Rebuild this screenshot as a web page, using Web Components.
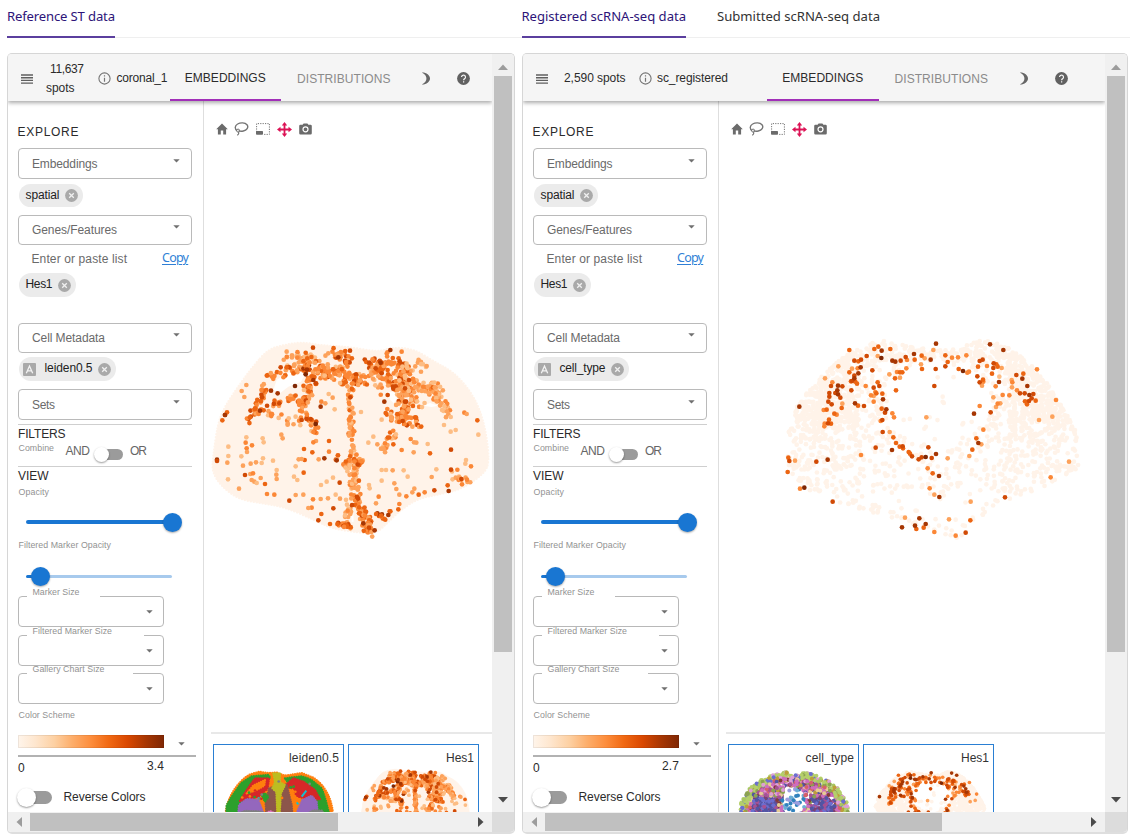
<!DOCTYPE html>
<html lang="en">
<head>
<meta charset="utf-8">
<title>Spatial data viewer</title>
<style>
html,body{margin:0;background:#fff;font-family:"Liberation Sans",Arial,sans-serif;color:#2b2b2b}
body{width:1137px;height:840px;overflow:hidden}
</style>
</head>
<body>
<app-shell></app-shell>
<script>
/* One line of text set to a given width by tracking */
class FitText extends HTMLElement{
  connectedCallback(){
    if(this.shadowRoot)return;
    const r=this.attachShadow({mode:'open'});
    r.innerHTML='<style>:host{display:block;white-space:pre;flex:none}</style><span><slot></slot></span>';
    const s=r.querySelector('span'),w=+this.getAttribute('w'),fs=+this.getAttribute('fs')||12;
    this.style.fontSize=fs+'px';
    const n=this.textContent.length,nat=s.getBoundingClientRect().width;
    if(n>1)s.style.letterSpacing=((w-nat)/(n-1))+'px';
    this.style.width=w+'px';
  }
}
customElements.define('fit-text',FitText);

class TabStrip extends HTMLElement{
  connectedCallback(){
    const r=this.attachShadow({mode:'open'});
    r.innerHTML=`<style>:host{display:flex;height:37px;border-bottom:1px solid #efefef;gap:31px;font-family:"Noto Sans","Open Sans",sans-serif;color:#333}
    div{height:38px;line-height:33px;box-sizing:border-box}
    .on{color:#2d1479;border-bottom:2px solid #5b3f9e}</style>`+
    JSON.parse(this.getAttribute('tabs')).map((t,i)=>`<div class="${i?'':'on'}"><fit-text w="${t[1]}" fs="13.1">${t[0]}</fit-text></div>`).join('');
  }
}
customElements.define('tab-strip',TabStrip);

const ICONS={
 menu:[12,12,'<path d="M0 2h12M0 4.7h12M0 7.4h12M0 10.1h12" stroke="#5f5f5f" stroke-width="1.4"/>'],
 info:[13,13,'<circle cx="6.5" cy="6.5" r="5.6" fill="none" stroke="#757575" stroke-width="1.1"/><path d="M6.5 5.7v4M6.5 3.3v1.3" stroke="#757575" stroke-width="1.2"/>'],
 moon:[10,13,'<path d="M.8.5C5 .2 9 3 9 6.500S5 12.800 .8 12.500C4.600 10.500 5.400 8.500 5.400 6.500S4.600 2.500 .8.500Z" fill="#666"/>'],
 help:[13,13,'<circle cx="6.5" cy="6.5" r="6.4" fill="#616161"/><path d="M4.500 5.100a2 2 0 1 1 3.300 1.500c-.8.6-1.200.9-1.200 1.700M6.600 9.200v1.300" fill="none" stroke="#f5f5f5" stroke-width="1.250"/>'],
 home:[12,12,'<path d="M6 .600 .2 6.300h1.700v5.200h2.900V7.600h2.400v3.900h2.900V6.300h1.700Z" fill="#6b6b6b"/>'],
 lasso:[15,14,'<path d="M3 8.600C.6 7 .6 3.600 3.600 2 6.400.400 11 .400 13 2.700c2 2.600-.3 5.600-3.700 6.300-2 .4-3.600.2-4.700-.400" fill="none" stroke="#757575" stroke-width="1.400"/><circle cx="4.100" cy="8.600" r="1.500" fill="none" stroke="#757575"/><path d="M4.500 10c.6 1.300 0 2.600-1.300 3.200" fill="none" stroke="#757575" stroke-width="1.200"/>'],
 select:[14,12,'<path d="M.6 9V.600H13.400V11.400H8" fill="none" stroke="#757575" stroke-width="1" stroke-dasharray="1.200 1.200"/><rect x="0" y="8" width="7" height="3.700" rx=".8" fill="#6b6b6b"/>'],
 move:[15,15,'<path d="M7.500 2v11M2 7.500h11" stroke="#dc1255" stroke-width="1.800"/><path d="M7.500 0 10.200 3.500H4.800ZM7.500 15l2.700-3.500H4.800ZM0 7.500l3.500-2.700v5.400ZM15 7.500l-3.500-2.700v5.400Z" fill="#dc1255"/>'],
 camera:[13,12,'<path d="M1.400 1.800h2.200L4.600.500h3.800l1 1.300h2.200q1.200 0 1.200 1.200v7.200q0 1.200-1.200 1.200H1.400Q.200 11.400.200 10.200V3q0-1.200 1.200-1.200Z" fill="#6b6b6b"/><circle cx="6.500" cy="6.300" r="2.500" fill="none" stroke="#fff" stroke-width="1.200"/>'],
 close:[13,13,'<circle cx="6.5" cy="6.5" r="6.4" fill="#a9a9a9"/><path d="M4.200 4.200l4.600 4.600M8.800 4.200l-4.600 4.600" stroke="#f0f0f0" stroke-width="1.300"/>'],
 abc:[13,13,'<rect width="13" height="13" rx="1" fill="#a9a9a9"/><path d="M3.300 10.300 6.500 3l3.200 7.300M4.600 7.900h3.800" fill="none" stroke="#f3f3f3" stroke-width="1.300"/>'],
 caret:[7,4,'<path d="M.3.300h6.400L3.500 3.400Z" fill="#707070"/>'],
 up:[10,6,'<path d="M0 6 5 .500 10 6Z" fill="#9c9c9c"/>'],
 down:[10,6,'<path d="M0 0h10L5 5.500Z" fill="#4b4b4b"/>'],
 left:[6,10,'<path d="M6 0v10L.500 5Z" fill="#9c9c9c"/>'],
 right:[6,10,'<path d="M0 0v10L5.500 5Z" fill="#4b4b4b"/>']
};
class UiIcon extends HTMLElement{
  connectedCallback(){
    const [w,h,p]=ICONS[this.getAttribute('name')];
    this.attachShadow({mode:'open'}).innerHTML=`<style>:host{display:block;flex:none;width:${w}px;height:${h}px}svg{display:block}</style><svg width="${w}" height="${h}" viewBox="0 0 ${w} ${h}">${p}</svg>`;
  }
}
customElements.define('ui-icon',UiIcon);

class SelectBox extends HTMLElement{
  connectedCallback(){
    this.attachShadow({mode:'open'}).innerHTML=`<style>:host{display:flex;box-sizing:border-box;border:1px solid #bababa;border-radius:4px;align-items:center;justify-content:space-between;padding:0 11px 0 13px;color:#6a6a6a}ui-icon{margin-bottom:6px}</style><fit-text w="${this.getAttribute('w')}">${this.getAttribute('label')}</fit-text><ui-icon name="caret"></ui-icon>`;
  }
}
customElements.define('select-box',SelectBox);

class SelectOutline extends HTMLElement{
  connectedCallback(){
    this.attachShadow({mode:'open'}).innerHTML=`<style>:host{display:flex;box-sizing:border-box;position:relative;width:146px;height:31px;border:1px solid #b8b8b8;border-radius:4px;align-items:center;justify-content:flex-end;padding-right:10px;color:#929292}
    div{position:absolute;left:8px;top:-11px;height:13px;line-height:13px;padding-left:5.500px;box-sizing:border-box;width:${this.getAttribute('gap')}px}
    div::before{content:"";position:absolute;left:0;right:0;top:9px;height:3px;background:#fff;z-index:-1}:host{z-index:0}</style><div><fit-text w="${this.getAttribute('w')}" fs="8.8">${this.getAttribute('label')}</fit-text></div><ui-icon name="caret"></ui-icon>`;
  }
}
customElements.define('select-outline',SelectOutline);

class ChipTag extends HTMLElement{
  connectedCallback(){
    const a=this.hasAttribute('abc');
    this.attachShadow({mode:'open'}).innerHTML=`<style>:host{display:flex;box-sizing:border-box;align-items:center;background:#ebebeb;border-radius:12px;height:24px;width:max-content;padding:0 5px 0 ${a?4:7}px;gap:5px;color:#222}ui-icon[name=abc]{margin-right:4px}fit-text{margin-bottom:2px}</style>${a?'<ui-icon name="abc"></ui-icon>':''}<fit-text w="${this.getAttribute('w')}">${this.getAttribute('label')}</fit-text><ui-icon name="close"></ui-icon>`;
  }
}
customElements.define('chip-tag',ChipTag);

class ToggleSwitch extends HTMLElement{
  connectedCallback(){
    this.attachShadow({mode:'open'}).innerHTML=`<style>:host{display:flex;align-items:center;flex:none;width:var(--w);height:var(--d)}
    i{width:var(--d);height:var(--d);border-radius:50%;background:#fff;box-shadow:0 1px 2px #0006;flex:none;position:relative;z-index:1}
    b{flex:1;height:var(--t);border-radius:7px;background:#9b9b9b;margin-left:calc(var(--d) / -1.3)}</style><i></i><b></b>`;
  }
}
customElements.define('toggle-switch',ToggleSwitch);

class RangeSlider extends HTMLElement{
  connectedCallback(){
    const v=this.getAttribute('value'),t=this.getAttribute('thick');
    this.attachShadow({mode:'open'}).innerHTML=`<style>:host{display:flex;align-items:center;height:20px;width:146px;margin-left:8px}
    .f{width:${v}px;height:${t}px;background:#1976d2;border-radius:3px}.r{flex:1;height:3px;background:#a7caed;border-radius:2px}
    i{width:19px;height:19px;border-radius:50%;background:#1976d2;margin:0 -9.5px;position:relative;box-shadow:0 1px 2px #0005;flex:none}</style><div class="f"></div><i></i><div class="r"></div>`;
  }
}
customElements.define('range-slider',RangeSlider);

class SideBar extends HTMLElement{
  connectedCallback(){
    const meta=this.getAttribute('meta'),mw=this.getAttribute('mw'),max=this.getAttribute('max');
    this.attachShadow({mode:'open'}).innerHTML=`<style>
    :host{display:flex;flex-direction:column;box-sizing:border-box;width:196px;flex:none;border-right:1px solid #dedede;padding:21px 11px 0 10px;overflow:hidden}
    :host>*{flex:none}
    .row{display:flex}
    hr{border:0;margin:0;height:1px;background:#cfcfcf;width:174px}
    .s{color:#929292}
    .ramp{width:146px;height:13px;background:linear-gradient(90deg,#fff5eb,#fee6ce 12%,#fdd0a2 25%,#fdae6b 37%,#fd8d3c 50%,#f16913 62%,#d94801 75%,#a63603 88%,#7f2704);box-shadow:inset 0 0 0 1px #0001}
    </style>
    <fit-text w="61" style="height:19px;line-height:20px;margin-left:-.5px">EXPLORE</fit-text>
    <select-box label="Embeddings" w="65.500" style="margin-top:7px;height:31px"></select-box>
    <chip-tag label="spatial" w="34" style="margin:5px 0 0 .5px;height:23px"></chip-tag>
    <select-box label="Genes/Features" w="85" style="margin-top:8px;height:30px"></select-box>
    <div class="row" style="margin-top:4px;height:20px;line-height:20px;color:#6a6a6a"><fit-text w="95.500" style="margin-left:13.500px">Enter or paste list</fit-text><fit-text w="27" fs="12.500" style="margin-left:35px;line-height:18px;color:#2f7fd6;text-decoration:underline;text-decoration-thickness:1px;text-underline-offset:2px;font-family:'Noto Sans',sans-serif">Copy</fit-text></div>
    <chip-tag label="Hes1" w="27" style="margin:4px 0 0 .5px"></chip-tag>
    <select-box label="Cell Metadata" w="73" style="margin:26px 0 0 0;height:30px"></select-box>
    <chip-tag abc label="${meta}" w="${mw}" style="margin:4px 0 0 .5px"></chip-tag>
    <select-box label="Sets" w="23" style="margin:8px 0 0 0;height:31px"></select-box>
    <hr style="margin:4px 0 0 0">
    <fit-text w="47.500" style="margin-top:1px;height:16px;line-height:16px">FILTERS</fit-text>
    <div class="row" style="height:24px;line-height:13px"><fit-text class="s" w="35.500" fs="8.8" style="margin:0 11.500px 0 .5px">Combine</fit-text><fit-text w="24.500" style="margin-top:3px;color:#666">AND</fit-text><toggle-switch style="--w:29px;--d:15px;--t:11px;margin:5px 7px 0 4px"></toggle-switch><fit-text w="17" style="margin-top:3px;color:#666">OR</fit-text></div>
    <hr>
    <fit-text w="30.500" style="margin-top:1px;height:15px;line-height:16px">VIEW</fit-text>
    <fit-text class="s" w="30.500" fs="8.8" style="margin:3px 0 0 .5px;height:12px;line-height:13px">Opacity</fit-text>
    <range-slider value="146" thick="4" style="margin-top:14px"></range-slider>
    <fit-text class="s" w="92.500" fs="8.8" style="margin:7px 0 0 .5px;height:13px;line-height:13px">Filtered Marker Opacity</fit-text>
    <range-slider value="14" thick="3" style="margin-top:14px"></range-slider>
    <select-outline label="Marker Size" w="47" gap="73" style="margin:10px 0 0 0"></select-outline>
    <select-outline label="Filtered Marker Size" w="79.500" gap="117" style="margin:8px 0 0 0"></select-outline>
    <select-outline label="Gallery Chart Size" w="72" gap="106" style="margin:7px 0 0 0"></select-outline>
    <fit-text class="s" w="56.500" fs="8.8" style="margin:5px 0 0 .5px;height:12px;line-height:13px">Color Scheme</fit-text>
    <div class="row" style="margin-top:14px;align-items:center"><div class="ramp"></div><ui-icon name="caret" style="margin:5px 0 0 14px"></ui-icon></div>
    <div style="margin-top:7px;height:2px;width:178px;background:#b2b2b2"></div>
    <div class="row" style="height:20px;width:146px;justify-content:space-between;line-height:18px"><fit-text w="6.500" style="margin-top:2px">0</fit-text><fit-text w="17">${max}</fit-text></div>
    <div class="row" style="margin:8px 0 0 -1px;height:24px;align-items:center"><toggle-switch style="--w:35px;--d:19px;--t:13px;margin-right:11.500px"></toggle-switch><fit-text w="82" style="margin-bottom:1px">Reverse Colors</fit-text></div>`;
  }
}
customElements.define('side-bar',SideBar);

/* ---- Plot data; units are thirds of a pixel ---- */
const RAMP=['#fdbd84','#fda25b','#fb8736','#ec6512','#d14a05','#a63603','#7f2704'];
function rng(a){return ()=>{a=(a+0x6D2B79F5)|0;let t=Math.imul(a^(a>>>15),1|a);t=(t+Math.imul(t^(t>>>7),61|t))^t;return ((t^(t>>>14))>>>0)/4294967296}}
const EDGE=[[190,43],[240,30],[290,22],[350,32],[430,36],[520,52],[560,38],[625,42],[690,82],[745,112],[793,165],[825,225],[844,300],[852,380],[838,415],[770,462],[700,478],[640,490],[590,522],[550,560],[512,596],[460,592],[380,580],[330,555],[240,516],[170,504],[100,492],[48,452],[22,410],[25,365],[38,270],[58,218],[98,158],[140,100]];
const BRAIN=(()=>{const n=EDGE.length,m=(a,b)=>((a[0]+b[0])/2)+' '+((a[1]+b[1])/2);let d='M'+m(EDGE[n-1],EDGE[0]);EDGE.forEach((p,i)=>{d+='Q'+p.join(' ')+' '+m(p,EDGE[(i+1)%n])});return d+'Z'})();
/* strips of dots: x1 y1 x2 y2 spread count base-level */
const STRIPS=[[250,70,330,75,26,44,1],[190,130,290,95,14,30,2],[135,260,180,160,14,34,2],[165,225,260,190,14,24,2],[200,240,290,265,18,18,1],[285,220,320,140,18,50,2],[300,95,325,140,12,16,3],[310,245,340,290,18,30,2],[380,50,440,80,22,30,2],[370,125,420,95,20,38,2],[410,130,485,130,20,48,2],[340,100,360,120,18,16,2],[436,150,440,350,10,54,1],[440,370,455,490,18,70,1],[415,370,480,385,10,16,2],[425,570,430,500,12,18,1],[385,570,430,572,10,20,3],[455,500,495,590,18,74,2.500],[510,540,555,540,14,14,3],[490,80,545,105,20,40,3],[545,75,600,110,24,58,2],[535,135,610,160,26,70,2],[600,160,590,250,24,62,2],[550,245,640,265,18,34,2],[620,150,695,165,24,62,1],[690,175,730,235,14,34,1],[545,350,560,290,22,20,1],[730,410,790,440,20,14,1],[590,110,650,90,26,20,0],[390,360,420,390,10,10,2],[360,60,365,110,20,10,1],[310,60,345,130,26,26,2],[500,110,530,170,16,16,1],[610,170,650,220,18,18,1]];
const LEFT='324 38 4 556 45 5 590 50 2 245 50 1 665 93 1 124 150 1 118 186 1 110 168 1 60 240 5 66 232 3 52 256 3 36 374 5 36 378 4 70 335 0 70 363 0 67 383 1 124 307 0 122 323 2 141 331 2 125 340 2 126 351 1 109 364 0 173 310 0 176 322 0 229 299 1 233 310 1 297 342 3 322 352 3 341 373 1 358 370 5 395 376 5 372 350 2 372 318 3 333 318 1 325 322 2 371 177 0 383 188 1 361 205 1 347 215 5 389 223 0 349 200 2 468 231 0 436 187 4 538 200 5 548 180 4 542 234 3 547 222 2 530 254 0 505 305 0 490 323 0 517 328 1 540 325 2 565 328 3 590 345 2 626 352 1 627 322 1 617 312 2 634 323 1 668 327 0 675 355 3 738 344 4 820 299 0 817 256 3 778 233 2 785 237 1 737 290 0 752 285 0 717 270 0 798 394 2 783 375 0 781 386 0 738 404 4 769 432 4 786 434 2 771 448 2 728 451 3 731 468 5 688 466 4 680 426 1 694 403 0 659 472 2 641 479 3 628 461 1 622 472 1 604 484 2 583 479 1 574 462 1 608 425 0 596 406 0 568 445 1 563 406 1 543 405 0 530 405 0 530 437 0 492 450 0 494 460 0 521 485 2 513 505 1 583 507 2 580 523 3 550 540 5 509 586 5 492 578 4 475 565 5 349 537 3 340 556 4 385 520 4 320 518 2 310 519 1 253 497 4 272 480 1 295 479 1 324 493 2 347 492 1 369 490 1 392 479 0 405 491 1 208 479 2 186 477 2 180 447 3 102 461 1 69 433 0 120 420 4 136 417 1 144 415 2 140 435 1 148 440 1 155 444 0 167 429 1 174 370 0 170 384 0 153 382 1 137 386 1 114 392 1 204 377 0 215 405 0 214 419 1 215 432 1 296 413 3 272 394 0 267 425 0 277 435 0 299 375 3 290 372 1 281 373 1 384 428 0 365 440 0 348 450 0 404 443 4 270 153 6 325 135 5 302 118 6 306 104 5 218 175 5 198 167 5 165 227 5 332 267 6 317 252 4 400 67 5 527 83 5 493 83 4 512 100 4 435 47 4 530 115 4 612 135 4 600 160 4 593 258 4 600 200 4 290 255 4 150 220 3 223 205 4 227 97 4 60 240 5';
const RIGHT='223 75 3 298 72 3 310 65 3 320 77 5 346 72 3 319 99 6 308 93 1 275 93 4 258 104 4 238 107 4 250 109 3 190 124 1 231 131 1 257 127 5 248 130 2 292 136 4 223 142 3 250 145 5 238 152 4 238 160 5 231 168 4 228 169 3 241 170 3 246 176 3 150 160 1 172 172 2 168 183 4 189 182 5 202 184 4 187 196 5 163 204 4 189 208 5 196 218 4 181 204 4 163 215 4 160 230 4 170 238 4 202 236 1 200 249 3 155 254 3 146 255 2 178 266 3 185 269 2 162 284 3 168 296 3 149 296 2 148 304 2 159 295 4 229 196 4 240 235 5 249 242 3 267 243 4 272 183 2 296 188 4 308 172 3 313 183 4 301 201 2 296 213 1 288 211 2 304 205 3 322 206 3 324 223 5 296 230 2 343 148 1 360 160 3 375 158 1 375 142 3 366 141 2 382 142 3 363 196 3 352 107 5 361 110 5 377 107 4 392 96 4 396 105 2 394 130 2 417 87 5 419 104 3 440 92 3 449 100 1 438 118 1 441 132 3 467 104 5 475 75 1 483 56 5 482 132 4 511 91 3 531 98 2 549 97 2 574 91 2 518 111 3 511 124 4 551 132 3 564 138 6 582 140 2 577 143 2 478 183 4 645 58 5 685 75 5 614 108 4 623 104 4 609 125 3 636 123 2 656 115 4 664 118 3 655 129 4 680 129 1 668 125 3 651 146 3 607 154 4 624 164 3 614 172 4 625 170 2 621 182 1 673 155 0 672 171 5 662 184 2 655 217 1 683 210 2 703 211 2 676 235 1 668 236 2 663 246 1 647 262 4 614 243 2 597 266 5 710 165 1 712 172 2 711 187 1 724 150 4 745 146 3 742 161 5 786 133 2 757 183 5 726 196 2 735 205 4 749 205 4 763 210 5 775 207 4 770 220 4 750 229 3 762 228 4 756 238 3 782 227 3 843 225 2 832 275 1 792 285 1 882 410 1 827 457 2 690 517 4 625 314 2 604 340 3 610 354 5 619 358 1 592 374 3 583 393 1 518 400 1 460 367 4 483 387 5 470 399 4 452 396 6 440 397 4 431 403 4 411 394 4 405 386 3 401 381 3 383 364 4 384 370 3 374 365 3 363 354 3 355 337 3 344 321 1 323 321 4 322 285 4 317 288 2 330 263 4 334 253 5 320 251 3 352 265 2 357 277 2 454 277 1 302 368 4 351 375 5 258 390 2 158 404 5 124 410 4 60 407 1 40 398 3 43 408 4 38 441 3 73 245 5 75 491 2 88 488 6 173 530 4 458 430 2 473 445 3 492 453 5 464 490 2 478 509 1 493 516 5 587 530 1 586 586 3 572 623 4 542 632 2 522 583 1 478 621 2 433 580 5 452 597 5 446 608 3 420 602 5 424 612 3 381 607 5 390 578 1';
function circ(x,y,r,c){return `<circle cx="${x.toFixed(1)}" cy="${y.toFixed(1)}" r="${r}" fill="${c}"/>`}
function parse(str){const n=str.split(' ').map(Number),o=[];for(let i=0;i<n.length;i+=3)o.push([n[i],n[i+1],n[i+2]]);return o}
function leftBrain(r){
  const q=rng(17),pts=[];
  for(const [a,b,c,d,s,n,k] of STRIPS)for(let i=0;i<n*.85;i++){
    const t=q()*1.1-.05,u=q()*6.283,m=Math.pow(q(),.6)*s;
    pts.push([a+(c-a)*t+Math.cos(u)*m,b+(d-b)*t+Math.sin(u)*m,Math.max(0,Math.min(5,Math.floor(k+(q()+q()-1)*2.300+.6)))]);
  }
  return `<path d="${BRAIN}" fill="#fff3e9"/><path d="${BRAIN}" fill="none" stroke="#fff3e9" stroke-width="8" stroke-dasharray="0 9" stroke-linecap="round"/><path d="M205 165 215 135 245 115 280 105 300 118 288 140 250 155 225 175ZM550 172 572 170 575 192 566 205 556 195ZM655 212 675 204 700 212 680 216ZM438 530 445 535 446 560 440 562Z" fill="#fff"/>`+
   pts.concat(parse(LEFT)).map(p=>circ(p[0],p[1],r,RAMP[p[2]])).join('');
}
function rightBrain(r){
  const q=rng(5);let s='';
  const top=x=>x<350?46+Math.pow((350-x)/310,2)*235:x<600?48+Math.sin((x-350)/250*3.14)*22:46+Math.pow((x-600)/312,2.200)*290;
  const bot=x=>x<130?440+(x-35)*.8:x<440?515+(x-130)*.29:x<550?605+(x-440)*.32:x<690?640-(x-550)*.8:530-(x-690)*.38;
  for(let i=0;i<9000;i++){
    const x=38+q()*872,y=40+q()*600,k=q();
    if(y<top(x)||y>bot(x)||(x<60&&y<310)||(x>890&&y>440))continue;
    const e=Math.hypot((x-490)/160,(y-235)/125);
    let d=1;
    if(e<1)d=.025;else if(y>500)d=.04+((bot(x)-y<30)?.2:0);else if(y>350)d=(x<260||x>680)?.27:.13;
    else if(x>250&&x<700)d=y<110?.5:.22;else if(y>295)d=.45;
    if(k<d)s+=circ(x,y,r,'#fff3e9');
  }
  return s+parse(RIGHT).sort((a,b)=>a[2]-b[2]).map(p=>circ(p[0],p[1],r,RAMP[p[2]])).join('');
}
function leiden(){
  const q=rng(9);
  const reg=(d,c)=>`<path d="${d}" fill="${c}" stroke="${c}" stroke-width="7" stroke-dasharray="0 7" stroke-linecap="round"/>`;
  let s=reg('M62 264 C66 225 90 175 135 148L163 140 185 144 215 143 240 152 290 144 325 158 C360 182 378 215 384 264Z','#ff7f0e')
  +reg('M64 264 65 240 85 208 108 175 140 154 190 150 196 158 150 170 125 195 100 264Z','#2ca02c')
  +reg('M240 160 290 154 318 164 350 190 362 225 372 264 342 264 330 220 300 185 250 175Z','#2ca02c')
  +reg('M105 228 125 195 150 160 192 160 188 190 160 215 125 225Z','#d62728')
  +reg('M245 178 265 160 295 170 330 195 345 222 320 225 280 215 258 195Z','#d62728')
  +reg('M125 205 145 182 180 165 178 182 150 197Z','#ff7f0e')
  +reg('M255 195 265 195 268 230 254 235Z','#ff7f0e')
  +reg('M100 264 102 240 125 222 160 225 175 264Z','#9467bd')
  +reg('M275 264 292 225 320 212 335 230 338 264Z','#9467bd')
  +reg('M192 190 212 185 212 264 184 264 182 235Z','#8c564b')
  +reg('M230 185 245 178 260 240 262 264 228 264Z','#8c564b')
  +reg('M205 145 225 145 225 172 240 180 228 205 224 264 217 264 214 200 202 190 210 172Z','#bcbd22')
  +reg('M170 210 180 205 190 215 180 230Z','#2ca02c')
  +reg('M105 264 120 258 165 259 178 264Z','#7f7f7f')+reg('M310 264 325 256 350 257 356 264Z','#7f7f7f')+reg('M185 264 195 258 208 264Z','#e377c2')
  +'<path d="M290 215 304 197M275 232 280 238M158 218 164 222" stroke="#17becf" stroke-width="6"/>';
  for(let i=0;i<16;i++)s+=circ(100+q()*245,165+q()*60,4,['#2ca02c','#ff7f0e','#d62728','#7f7f7f'][i%4]);
  return s;
}
function cellTypes(){
  const q=rng(31);let s='';const pick=a=>a[Math.floor(q()*a.length)];
  for(let i=0;i<1500;i++){
    const x=72+q()*330,y=138+q()*128,e=Math.hypot((x-237)/163,(y-262)/122),h=Math.hypot((x-236)/37,(y-230)/48);
    if(e>1||(y<150&&Math.abs(x-237)<20))continue;
    if(h<1){if(q()<.2)s+=circ(x,y,6,pick(['#3182bd','#3182bd','#6baed6','#9c9ede']));continue}
    const dx=Math.abs(x-237);
    s+=circ(x,y,6,e>.86?pick(['#b5cf6b','#b5cf6b','#b5cf6b','#8ca252','#bd9e39','#a8c763','#6b6ecf','#de9ed6']):
      (y>215&&dx>50&&dx<125)?pick(['#5254a3','#7b4173','#6b6ecf','#5254a3','#6b6ecf','#a55194']):
      pick(['#ce6dbd','#a55194','#d6616b','#e7cb94','#de9ed6','#843c39','#ce6dbd','#5254a3','#bd9e39','#ce6dbd','#8ca252']));
  }
  return s;
}
const DRAW={left:leftBrain,right:rightBrain,leiden,cells:cellTypes};

/* Scatter plot: kind picks the data, box is the SVG viewBox, dot the marker radius */
class ScatterPlot extends HTMLElement{
  connectedCallback(){
    this.attachShadow({mode:'open'}).innerHTML=`<style>:host{display:block}svg{display:block;width:100%;height:100%}</style><svg viewBox="${this.getAttribute('box')}" preserveAspectRatio="none">${DRAW[this.getAttribute('kind')](this.getAttribute('dot')||7)}</svg>`;
  }
}
customElements.define('scatter-plot',ScatterPlot);

class GalleryCard extends HTMLElement{
  connectedCallback(){
    this.attachShadow({mode:'open'}).innerHTML=`<style>:host{display:grid;box-sizing:border-box;height:90px;border:1px solid #2a7fd3;flex:none;overflow:hidden;grid-template:68px/100%}
    scatter-plot,fit-text{grid-area:1/1}fit-text{justify-self:end;margin-right:4px;line-height:26px;position:relative;color:#333}scatter-plot{height:68px}</style>
    <scatter-plot kind="${this.getAttribute('kind')}" box="${this.getAttribute('box')}" dot="14.5"></scatter-plot><fit-text w="${this.getAttribute('w')}">${this.getAttribute('label')}</fit-text>`;
  }
}
customElements.define('gallery-card',GalleryCard);

class PlotArea extends HTMLElement{
  connectedCallback(){
    this.attachShadow({mode:'open'}).innerHTML=`<style>:host{display:flex;flex-direction:column;flex:1;min-width:0;overflow:hidden}
    :host>*{flex:none}.tools{display:flex;align-items:center;height:20px;padding:18px 0 0 11.500px;gap:6.800px}
    .main{height:593px}.gal{border-top:2px solid #e8e8e8;margin-left:7px;padding:10px 0 0 2px;display:flex;gap:4px}
    </style><div class="tools"><ui-icon name="home"></ui-icon><ui-icon name="lasso"></ui-icon><ui-icon name="select"></ui-icon><ui-icon name="move"></ui-icon><ui-icon name="camera"></ui-icon></div><div class="main"><slot></slot></div><div class="gal"><slot name="card"></slot></div>`;
  }
}
customElements.define('plot-area',PlotArea);

class TopBar extends HTMLElement{
  connectedCallback(){
    const big=this.hasAttribute('wide');
    this.attachShadow({mode:'open'}).innerHTML=`<style>:host{display:flex;box-sizing:border-box;height:47px;background:#f5f5f5;align-items:center;box-shadow:0 2px 4px #0005;position:relative;z-index:2;flex:none;padding:2px 0 0 13px;line-height:18px}
    .tab{height:45px;line-height:45px;box-sizing:border-box;display:flex;justify-content:center;width:111.500px;border-bottom:2px solid #a12fb8}
    .dim{color:#8b8b8b}</style><ui-icon name="menu"></ui-icon>`+
    (big?`<fit-text w="61.500" style="margin:0 0 1px 16px">2,590 spots</fit-text><ui-icon name="info" style="margin-left:13px"></ui-icon><fit-text w="71" style="margin:0 0 1px 5.500px">sc_registered</fit-text>`
        :`<div style="margin:0 0 1px 13px;width:39px;display:flex;flex-direction:column;gap:1px"><fit-text w="34" style="margin-left:4px">11,637</fit-text><fit-text w="28.500">spots</fit-text></div><ui-icon name="info" style="margin-left:13px"></ui-icon><fit-text w="51" style="margin:0 0 1px 5.500px">coronal_1</fit-text>`)+
    `<div class="tab" style="margin-left:${big?39:2}px"><fit-text w="81">EMBEDDINGS</fit-text></div><fit-text class="dim" w="93.500" style="margin-left:16px">DISTRIBUTIONS</fit-text><ui-icon name="moon" style="margin-left:30.500px"></ui-icon><ui-icon name="help" style="margin-left:26px"></ui-icon>`;
  }
}
customElements.define('top-bar',TopBar);

/* Framed viewport with scroll bars; bar and body are slotted */
class FramePanel extends HTMLElement{
  connectedCallback(){
    this.attachShadow({mode:'open'}).innerHTML=`<style>:host{display:grid;box-sizing:border-box;height:781px;border:1px solid #d6d6d6;border-bottom:2px solid #dedede;border-radius:5px;overflow:hidden;grid-template:758px 1fr/1fr 22px}
    .v{display:flex;flex-direction:column;overflow:hidden;min-width:0;background:#fff}
    .sv{background:#f0f0f0;display:flex;flex-direction:column;align-items:center;padding:10px 0 9px}
    .sv b{width:18px;height:576px;background:#c0c0c0;margin-top:6px;flex:none}.sv ui-icon:last-child{margin-top:auto}
    .sh{background:#f0f0f0;display:flex;align-items:center;padding:0 8px}
    .sh b{height:18px;width:${this.getAttribute('thumb')}px;background:#c0c0c0;margin-left:8px}.sh ui-icon:last-child{margin-left:auto}
    .c{background:#dcdcdc}</style><div class="v"><slot></slot></div><div class="sv"><ui-icon name="up"></ui-icon><b></b><ui-icon name="down"></ui-icon></div><div class="sh"><ui-icon name="left"></ui-icon><b></b><ui-icon name="right"></ui-icon></div><div class="c"></div>`;
  }
}
customElements.define('frame-panel',FramePanel);

class AppShell extends HTMLElement{
  connectedCallback(){
    this.attachShadow({mode:'open'}).innerHTML=`<style>:host{display:grid;grid-template-columns:508px 606px;column-gap:7px;padding-left:7px;grid-template-rows:38px 781px;row-gap:15px}
    .b{display:flex;flex:1;min-height:0}tab-strip{margin-right:-7px}tab-strip.r{margin:0 -2px 0 -.5px}</style>
    <tab-strip tabs='[["Reference ST data",108]]'></tab-strip>
    <tab-strip class="r" tabs='[["Registered scRNA-seq data",164.5],["Submitted scRNA-seq data",163]]'></tab-strip>
    <frame-panel thumb="308"><top-bar></top-bar><div class="b"><side-bar meta="leiden0.5" mw="48" max="3.4"></side-bar>
      <plot-area><scatter-plot kind="left" box="0 0 870 630" style="width:290px;height:210px;margin:196px 0 0 1px"></scatter-plot>
      <gallery-card slot="card" kind="leiden" label="leiden0.5" w="50" box="27 60 387 204" style="width:131px"></gallery-card>
      <gallery-card slot="card" kind="left" label="Hes1" w="28" box="-69 -163 985 523" style="width:131px"></gallery-card></plot-area></div></frame-panel>
    <frame-panel thumb="397"><top-bar wide></top-bar><div class="b"><side-bar meta="cell_type" mw="46" max="2.7"></side-bar>
      <plot-area><scatter-plot kind="right" box="0 0 960 675" style="width:320px;height:225px;margin:186px 0 0 56px"></scatter-plot>
      <gallery-card slot="card" kind="cells" label="cell_type" w="48.500" box="42 60 387 204" style="width:131px"></gallery-card>
      <gallery-card slot="card" kind="right" label="Hes1" w="28" box="-50 -165 1023 540" style="width:131px"></gallery-card></plot-area></div></frame-panel>`;
  }
}
customElements.define('app-shell',AppShell);
</script>
</body>
</html>
